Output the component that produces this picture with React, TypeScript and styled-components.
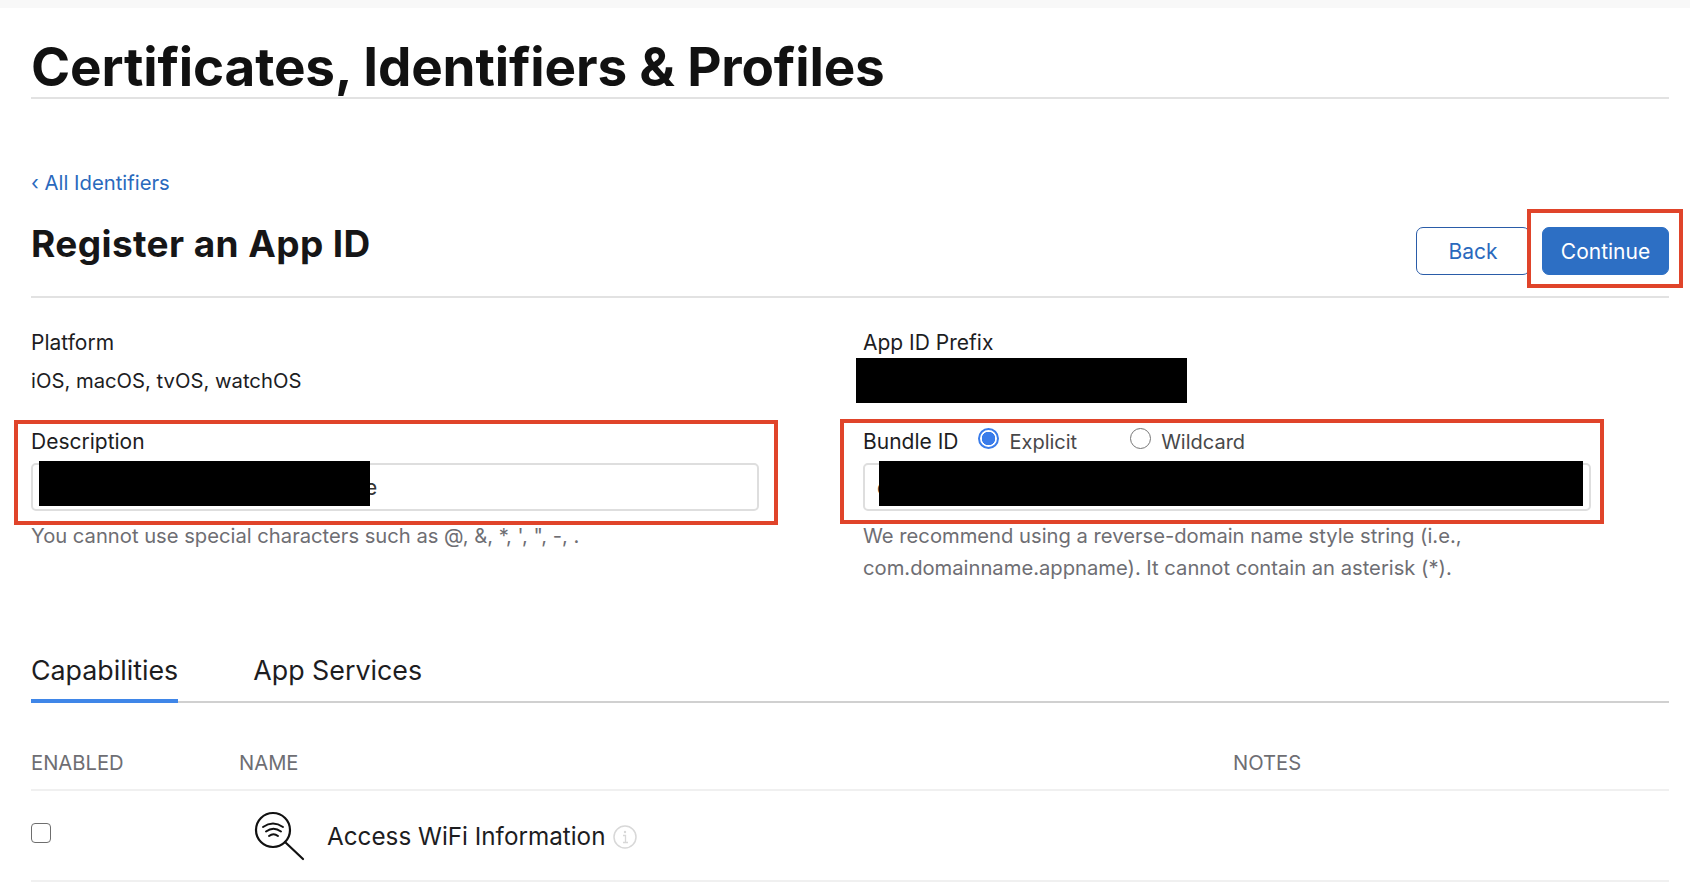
import React from 'react';
import styled, { createGlobalStyle } from 'styled-components';

const GlobalStyle = createGlobalStyle`
  html, body {
    margin: 0;
    padding: 0;
    background: #fff;
    overflow: hidden;
  }
  body {
    font-family: Inter, "Liberation Sans", sans-serif;
    color: #1d1d1f;
  }
`;

const TopStrip = styled.div`
  height: 8px;
  background: #f8f8f8;
`;

const Page = styled.main`
  padding: 0 21px 0 31px;
`;

const Title = styled.h1`
  margin: 0;
  height: 89px;
  line-height: 118px;
  font-size: 53px;
  font-weight: 700;
  letter-spacing: -0.15px;
  white-space: nowrap;
  color: #111;
  border-bottom: 2px solid #e2e2e2;
`;

const BackLink = styled.a`
  display: block;
  margin-top: 69px;
  line-height: 30px;
  font-size: 20.3px;
  color: #2a69bd;
  text-decoration: none;
`;

const HeadRow = styled.div`
  display: flex;
  justify-content: space-between;
  align-items: flex-start;
  height: 98px;
  border-bottom: 2px solid #e2e2e2;
`;

const Subtitle = styled.h2`
  margin: 0;
  padding-top: 21px;
  line-height: 50px;
  font-size: 37px;
  font-weight: 700;
  letter-spacing: 0.4px;
  color: #161617;
`;

const Actions = styled.div`
  display: flex;
  gap: 12px;
  padding-top: 29px;
`;

const Button = styled.button<{ $primary?: boolean }>`
  box-sizing: border-box;
  height: 48px;
  border-radius: 7px;
  font-family: inherit;
  font-size: 21px;
  border: 1.5px solid ${(p) => (p.$primary ? '#2d6fc4' : '#2a5ca8')};
  background: ${(p) => (p.$primary ? '#2d6fc4' : '#fff')};
  color: ${(p) => (p.$primary ? '#fff' : '#2a69bd')};
  width: ${(p) => (p.$primary ? '127px' : '114px')};
`;

const Callout = styled.div`
  position: relative;
`;

const RedBox = styled.div<{ $top: number; $right: number; $bottom: number; $left: number }>`
  position: absolute;
  top: ${(p) => p.$top}px;
  right: ${(p) => p.$right}px;
  bottom: ${(p) => p.$bottom}px;
  left: ${(p) => p.$left}px;
  border: 4px solid #e0442a;
  pointer-events: none;
`;

const FormGrid = styled.div`
  display: grid;
  grid-template-columns: 832px 1fr;
  padding-top: 30px;
`;

const Column = styled.div<{ $width: number }>`
  width: ${(p) => p.$width}px;
`;

const Label = styled.div`
  line-height: 30px;
  font-size: 21px;
  color: #1d1d1f;
`;

const PlainValue = styled.div`
  margin-top: 8px;
  height: 61px;
  line-height: 30px;
  font-size: 20.25px;
  color: #1d1d1f;
`;

const Redacted = styled.div`
  margin: 0 0 0 -7px;
  width: 331px;
  height: 45px;
  background: #000;
`;

const PrefixGroup = styled.div`
  height: 99px;
`;

const LabelRow = styled.div`
  display: flex;
  align-items: flex-start;
`;

const RadioWrap = styled.label<{ $gapLeft: number }>`
  display: flex;
  align-items: flex-start;
  margin-left: ${(p) => p.$gapLeft}px;
  line-height: 30px;
  font-size: 20px;
  color: #48484a;
`;

const Radio = styled.input.attrs({ type: 'radio' })`
  appearance: none;
  box-sizing: border-box;
  width: 21px;
  height: 21px;
  margin: 1px 10px 0 0;
  border-radius: 50%;
  border: 1.5px solid #767676;
  background: #fff;
  &:checked {
    border: 2px solid #3a7cea;
    background: radial-gradient(circle, #3a7cea 0 6.5px, #fff 7px);
  }
`;

const InputBox = styled.div`
  position: relative;
  box-sizing: border-box;
  height: 48px;
  margin-top: 6px;
  border: 2px solid #dedede;
  border-radius: 5px;
  line-height: 46px;
  font-size: 21px;
  color: #333;
`;

const InputText = styled.span<{ $indent: number }>`
  padding-left: ${(p) => p.$indent}px;
`;

const InputCover = styled.div<{ $left: number; $width: number }>`
  position: absolute;
  top: -4px;
  left: ${(p) => p.$left}px;
  width: ${(p) => p.$width}px;
  height: 45px;
  background: #000;
`;

const Hint = styled.div`
  margin-top: 9px;
  line-height: 32px;
  font-size: 20.2px;
  color: #6e6e73;
`;

const Tabs = styled.div`
  display: flex;
  gap: 75px;
  margin-top: 56px;
  border-bottom: 2px solid #d0d0d0;
`;

const Tab = styled.div<{ $active?: boolean }>`
  height: 63px;
  line-height: 61px;
  font-size: 26.8px;
  margin-bottom: -2px;
  color: #1d1d1f;
  border-bottom: 4px solid ${(p) => (p.$active ? '#3f86e8' : 'transparent')};
  box-sizing: border-box;
`;

const TableRow = styled.div<{ $head?: boolean }>`
  display: grid;
  grid-template-columns: 208px 994px 1fr;
  align-items: ${(p) => (p.$head ? 'end' : 'center')};
  height: ${(p) => (p.$head ? '88px' : '91px')};
  padding-bottom: ${(p) => (p.$head ? '11px' : '0')};
  box-sizing: border-box;
  border-bottom: 2px solid #f0f0f0;
`;

const HeadCell = styled.div`
  line-height: 30px;
  font-size: 20.2px;
  color: #6e6e73;
`;

const Checkbox = styled.input.attrs({ type: 'checkbox' })`
  appearance: none;
  display: block;
  box-sizing: border-box;
  width: 20px;
  height: 20px;
  margin: 0 0 6px;
  border: 1.5px solid #6e6e6e;
  border-radius: 4px;
  background: #fff;
`;

const NameCell = styled.div`
  display: flex;
  align-items: center;
  padding-left: 14px;
`;

const CapName = styled.span`
  margin: 2px 0 0 22px;
  font-size: 24.25px;
  color: #1d1d1f;
`;

const InfoWrap = styled.span`
  display: inline-flex;
  margin: 2px 0 0 8px;
`;

function WifiSearchIcon() {
  return (
    <svg width="52" height="52" viewBox="0 0 52 52" fill="none" stroke="#111" strokeLinecap="round">
      <circle cx="20" cy="20" r="17" strokeWidth="2.2" />
      <path d="M32 32 L50 49" strokeWidth="2.2" />
      <path d="M10 17 Q20 10 30 17" strokeWidth="2" />
      <path d="M13 21.5 Q20.5 16 28 21.5" strokeWidth="2" />
      <path d="M16 26 Q20.5 22.5 25 26" strokeWidth="2" />
    </svg>
  );
}

function InfoIcon() {
  return (
    <svg width="24" height="24" viewBox="0 0 24 24" fill="none" stroke="#d8d8d8">
      <circle cx="12" cy="12" r="11" strokeWidth="1.5" />
      <circle cx="12" cy="7" r="1.2" fill="#d8d8d8" stroke="none" />
      <path d="M10 10.5 H12.5 V17 M10 17.5 H15" strokeWidth="1.3" />
    </svg>
  );
}

export default function App() {
  return (
    <>
      <GlobalStyle />
      <TopStrip />
      <Page>
        <Title>Certificates, Identifiers &amp; Profiles</Title>
        <BackLink href="#">‹ All Identifiers</BackLink>
        <HeadRow>
          <Subtitle>Register an App ID</Subtitle>
          <Actions>
            <Button>Back</Button>
            <Callout>
              <Button $primary>Continue</Button>
              <RedBox $top={-18} $right={-14} $bottom={-13} $left={-15} />
            </Callout>
          </Actions>
        </HeadRow>
        <FormGrid>
          <Column $width={728}>
            <Label>Platform</Label>
            <PlainValue>iOS, macOS, tvOS, watchOS</PlainValue>
            <Callout>
              <Label>Description</Label>
              <InputBox>
                <InputText $indent={332}>e</InputText>
                <InputCover $left={6} $width={331} />
              </InputBox>
              <RedBox $top={-7} $right={-19} $bottom={-14} $left={-17} />
            </Callout>
            <Hint>You cannot use special characters such as @, &amp;, *, ', ", -, .</Hint>
          </Column>
          <Column $width={728}>
            <PrefixGroup>
              <Label>App ID Prefix</Label>
              <Redacted />
            </PrefixGroup>
            <Callout>
              <LabelRow>
                <Label>Bundle ID</Label>
                <RadioWrap $gapLeft={20}>
                  <Radio name="bundle" defaultChecked />
                  Explicit
                </RadioWrap>
                <RadioWrap $gapLeft={53}>
                  <Radio name="bundle" />
                  Wildcard
                </RadioWrap>
              </LabelRow>
              <InputBox>
                <InputText $indent={12}>c</InputText>
                <InputCover $left={14} $width={704} />
              </InputBox>
              <RedBox $top={-8} $right={-13} $bottom={-13} $left={-23} />
            </Callout>
            <Hint>
              We recommend using a reverse-domain name style string (i.e.,
              <br />
              com.domainname.appname). It cannot contain an asterisk (*).
            </Hint>
          </Column>
        </FormGrid>
        <Tabs>
          <Tab $active>Capabilities</Tab>
          <Tab>App Services</Tab>
        </Tabs>
        <TableRow $head>
          <HeadCell>ENABLED</HeadCell>
          <HeadCell>NAME</HeadCell>
          <HeadCell>NOTES</HeadCell>
        </TableRow>
        <TableRow>
          <Checkbox />
          <NameCell>
            <WifiSearchIcon />
            <CapName>Access WiFi Information</CapName>
            <InfoWrap>
              <InfoIcon />
            </InfoWrap>
          </NameCell>
          <span />
        </TableRow>
      </Page>
    </>
  );
}
